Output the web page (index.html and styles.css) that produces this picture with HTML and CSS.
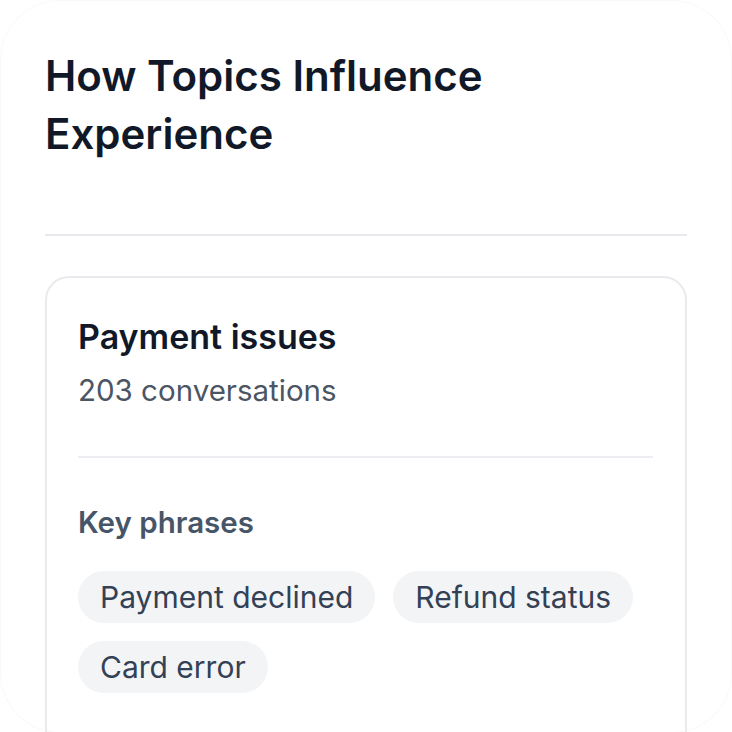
FILE: index.html
```html
<!DOCTYPE html>
<html lang="en">
<head>
<meta charset="utf-8">
<link rel="stylesheet" href="styles.css">
</head>
<body>
<div class="frame">
  <h1 class="title">How Topics Influence Experience</h1>
  <hr class="rule">
  <section class="card">
    <h2 class="card-title">Payment issues</h2>
    <p class="card-count">203 conversations</p>
    <hr class="card-rule">
    <h3 class="label">Key phrases</h3>
    <div class="chips">
      <span class="chip">Payment declined</span>
      <span class="chip">Refund status</span>
      <span class="chip">Card error</span>
    </div>
  </section>
</div>
</body>
</html>
```

FILE: styles.css
```css
* { box-sizing: border-box; }
html, body { margin: 0; padding: 0; background: #ffffff; }
body {
  font-family: Inter, "Noto Sans", "Liberation Sans", sans-serif;
  width: 732px;
  height: 732px;
  overflow: hidden;
}
.frame {
  width: 732px;
  height: 733px;
  border-radius: 60px;
  box-shadow: inset 0 0 0 1px #f9f9fa;
  padding: 47px 45px 0 45px;
}
.title {
  margin: 0;
  width: 520px;
  font-size: 42px;
  line-height: 58px;
  font-weight: 600;
  color: #111827;
}
.rule {
  margin: 71px 0 0 0;
  border: 0;
  height: 2px;
  background: #e8e9ed;
}
.card {
  margin-top: 40px;
  border: 2px solid #e9eaee;
  border-radius: 24px;
  padding: 39px 32px 60px 31px;
}
.card-title {
  margin: 0;
  font-size: 34px;
  line-height: 40px;
  font-weight: 600;
  color: #111827;
}
.card-count {
  margin: 15px 0 0 0;
  font-size: 29.5px;
  line-height: 36px;
  color: #4b5563;
}
.card-rule {
  margin: 48px 0 0 0;
  border: 0;
  height: 2px;
  background: #edeef1;
}
.label {
  margin: 46px 0 0 0;
  font-size: 29.5px;
  line-height: 36px;
  font-weight: 600;
  color: #475569;
}
.chips {
  margin-top: 31px;
  display: flex;
  flex-wrap: wrap;
  gap: 18px 18px;
  width: 575px;
}
.chip {
  display: inline-flex;
  align-items: center;
  height: 52px;
  padding: 0 22px;
  border-radius: 999px;
  background: #f3f4f6;
  color: #334155;
  font-size: 30px;
}
```
